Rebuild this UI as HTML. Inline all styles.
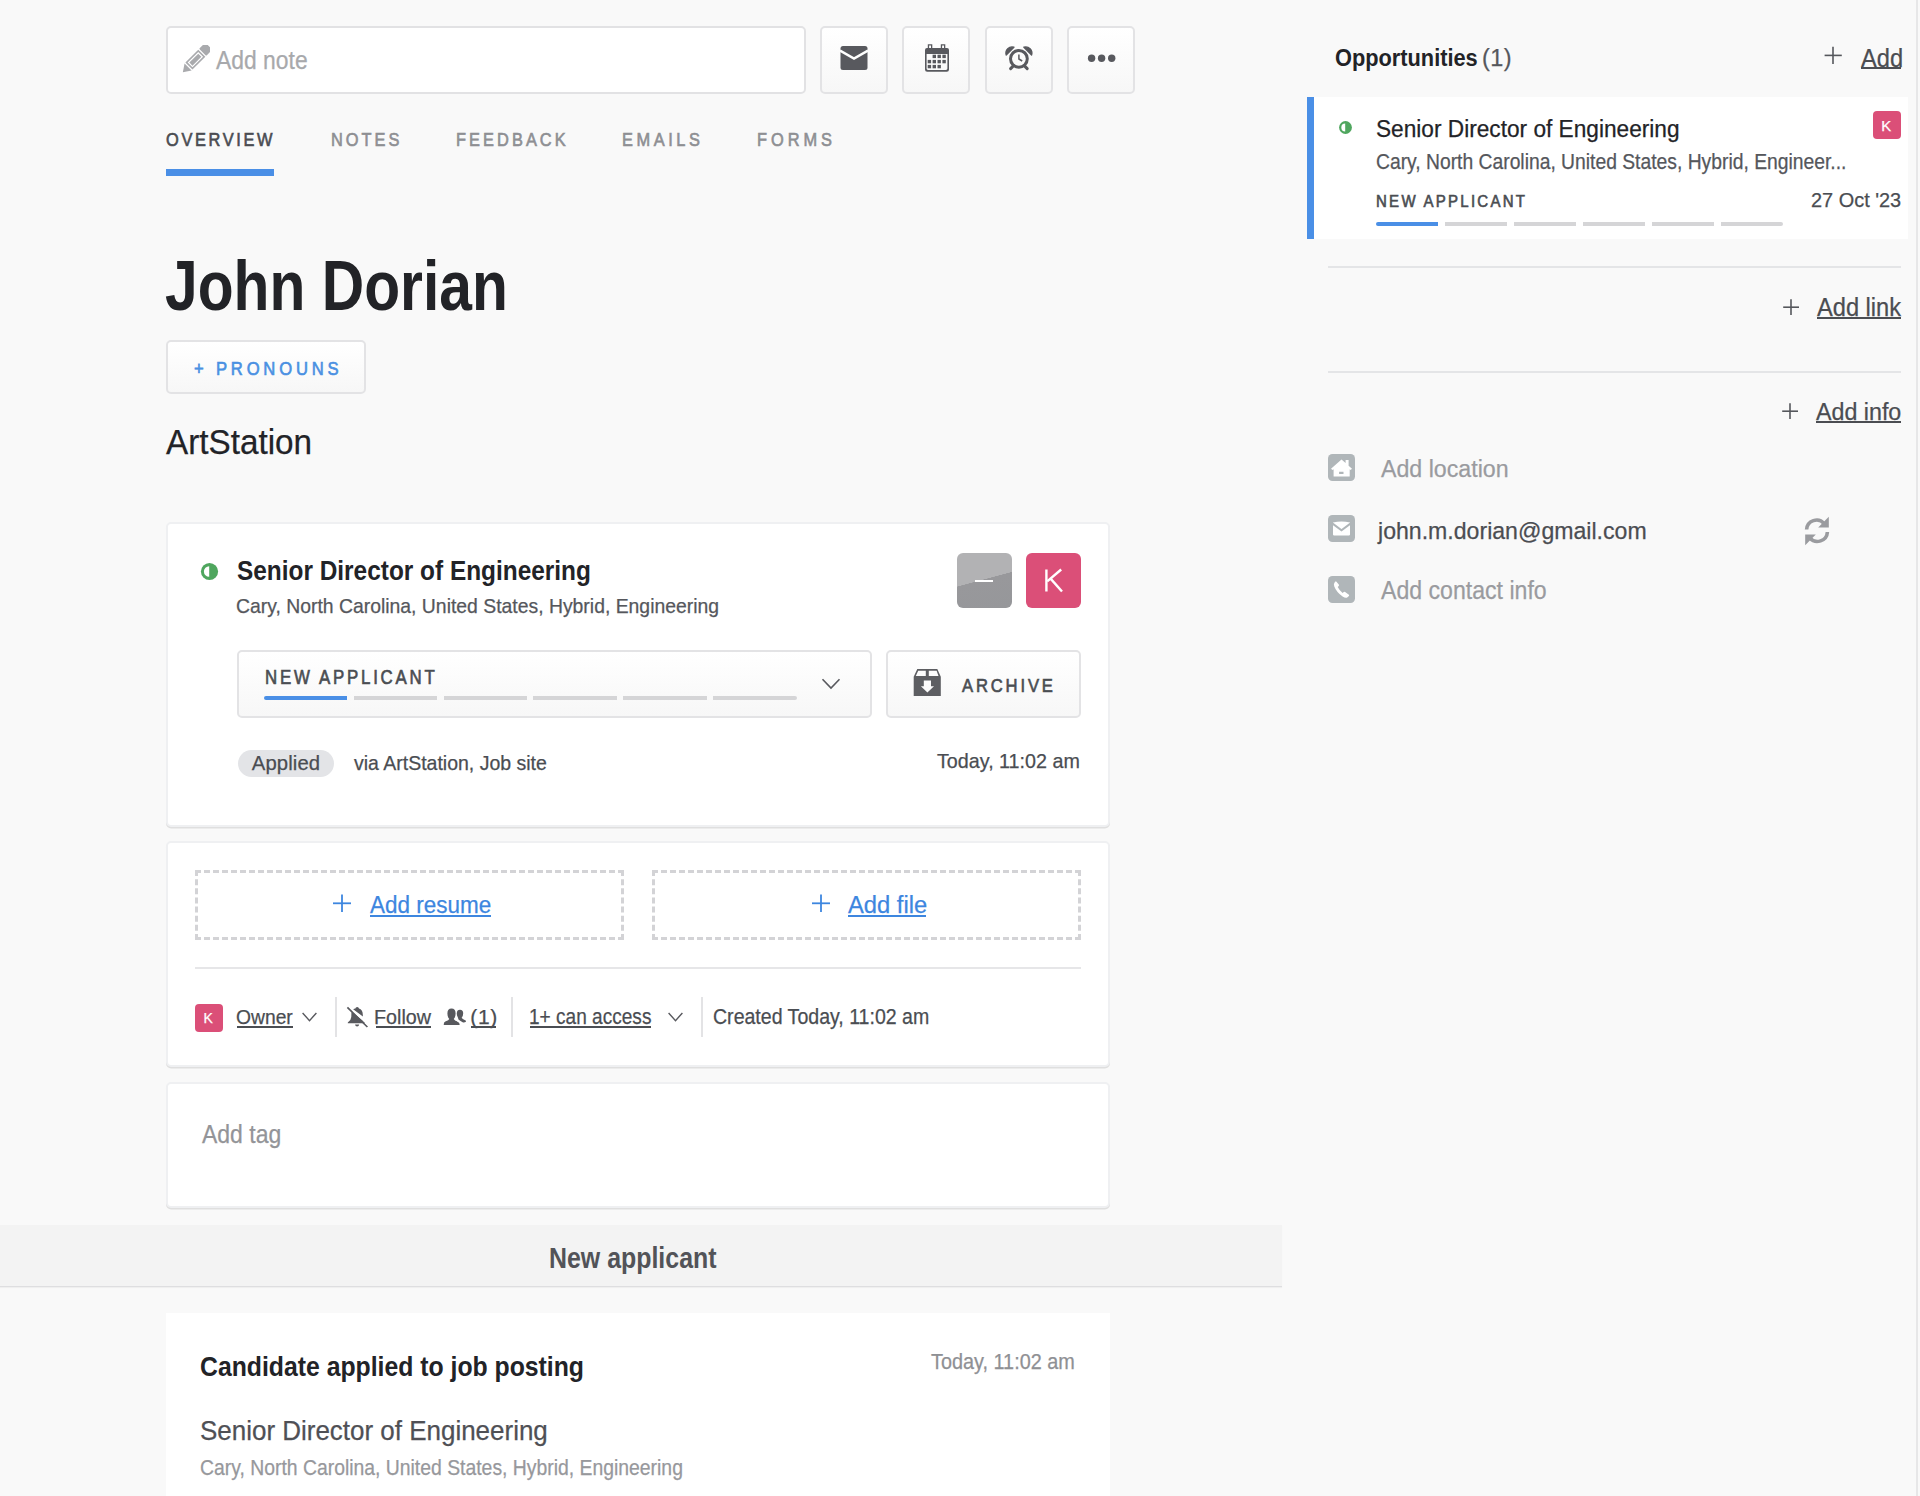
<!DOCTYPE html>
<html><head><meta charset="utf-8"><title>John Dorian</title>
<style>
html,body{margin:0;padding:0}
body{width:1920px;height:1496px;overflow:hidden;position:relative;background:#f9f9f9;font-family:"Liberation Sans",sans-serif}
.ab,.box,.btn,.card,.tx{position:absolute}
.box{box-sizing:border-box;border:2px solid #e2e2e4}
.btn{box-sizing:border-box;width:68px;height:68px;border:2px solid #e3e3e5;border-radius:5px;background:linear-gradient(#fff,#f7f7f7)}
.card{box-sizing:border-box;background:#fff;border:2px solid #eff0f2;border-radius:5px;box-shadow:0 1.5px 0.5px rgba(0,0,0,0.1)}
.gbar{height:4px;background:#d5d5d7}
.sep{top:997px;width:2px;height:40px;background:#e3e3e5}
.tx{white-space:nowrap}
</style></head><body>
<!-- top bar -->
<div class="box" style="left:166px;top:26px;width:640px;height:68px;border-radius:5px;background:#fff"></div>
<svg class="ab" style="left:182px;top:45px" width="28" height="28" viewBox="0 0 28 28">
 <g transform="translate(14 14) rotate(-45)" fill="#a9aaad">
  <polygon points="-18.6,0 -11.2,-5 -11.2,5"/>
  <path d="M-10,-5 H8.2 V5 H-10 Z M-8.4,-3.4 V3.4 H6.6 V-3.4 Z" fill-rule="evenodd"/>
  <rect x="-7.2" y="-2.2" width="12.6" height="4.4"/>
  <rect x="9.4" y="-5" width="8.8" height="10" rx="1"/>
 </g>
</svg>
<div class="btn" style="left:820px;top:26px"></div>
<div class="btn" style="left:902px;top:26px"></div>
<div class="btn" style="left:985px;top:26px"></div>
<div class="btn" style="left:1067px;top:26px"></div>
<svg class="ab" style="left:840px;top:46px" width="28" height="24" viewBox="0 0 28 24">
 <rect x="0.5" y="0" width="27" height="24" rx="2.5" fill="#58595e"/>
 <polyline points="0,4.6 14,12.6 28,4.6" fill="none" stroke="#fff" stroke-width="2.6"/>
</svg>
<svg class="ab" style="left:924px;top:43px" width="26" height="30" viewBox="0 0 26 30">
 <g fill="#58595e">
  <path d="M1,7 Q1,5 3,5 H23 Q25,5 25,7 V26.5 Q25,28.7 22.8,28.7 H3.2 Q1,28.7 1,26.5 Z M2.6,11 V25.6 Q2.6,27 4,27 H22 Q23.4,27 23.4,25.6 V11 Z" fill-rule="evenodd"/>
  <path d="M3.8,1.3 H8.3 V7.3 H3.8 Z M5.1,2.6 V6 H7 V2.6 Z" fill-rule="evenodd"/>
  <path d="M16.8,1.3 H21.3 V7.3 H16.8 Z M18.1,2.6 V6 H20 V2.6 Z" fill-rule="evenodd"/>
  <rect x="8.6" y="11.7" width="3.4" height="3.4"/><rect x="13.5" y="11.7" width="3.4" height="3.4"/><rect x="18.4" y="11.7" width="3.4" height="3.4"/>
  <rect x="3.7" y="16.9" width="3.4" height="3.4"/><rect x="8.6" y="16.9" width="3.4" height="3.4"/><rect x="13.5" y="16.9" width="3.4" height="3.4"/><rect x="18.4" y="16.9" width="3.4" height="3.4"/>
  <rect x="3.7" y="21.9" width="3.4" height="3.4"/><rect x="8.6" y="21.9" width="3.4" height="3.4"/><rect x="13.5" y="21.9" width="3.4" height="3.4"/>
 </g>
</svg>
<svg class="ab" style="left:1004px;top:45px" width="30" height="26" viewBox="0 0 30 26">
 <g fill="none" stroke="#58595e">
  <circle cx="14.9" cy="13.8" r="8.4" stroke-width="3"/>
  <polyline points="14.9,9.4 14.9,14 18.2,16" stroke-width="1.5"/>
  <line x1="9.6" y1="20.6" x2="6.6" y2="23.6" stroke-width="3" stroke-linecap="round"/>
  <line x1="20.2" y1="20.6" x2="23.2" y2="23.6" stroke-width="3" stroke-linecap="round"/>
 </g>
 <g fill="#58595e">
  <path d="M2.2,9.9 A6.2,6.2 0 0 1 9.9,2.2 Z" stroke="#58595e" stroke-width="1.4" stroke-linejoin="round"/>
  <path d="M27.6,9.9 A6.2,6.2 0 0 0 19.9,2.2 Z" stroke="#58595e" stroke-width="1.4" stroke-linejoin="round"/>
 </g>
</svg>
<svg class="ab" style="left:1086px;top:52px" width="32" height="12" viewBox="0 0 32 12">
 <g fill="#58595e"><circle cx="5.6" cy="6.2" r="3.7"/><circle cx="15.6" cy="6.2" r="3.7"/><circle cx="25.7" cy="6.2" r="3.7"/></g>
</svg>
<div class="ab" style="left:166px;top:169px;width:108px;height:7px;background:#4a8fe6"></div>

<!-- pronouns -->
<div class="btn" style="left:166px;top:340px;width:200px;height:54px"></div>

<!-- card1 -->
<div class="card" style="left:166px;top:522px;width:944px;height:305px"></div>
<svg class="ab" style="left:200px;top:562px" width="19" height="19" viewBox="0 0 19 19">
 <circle cx="9.5" cy="9.5" r="8.6" fill="#4fa65e"/>
 <path d="M9.2,4.2 A5.3,5.3 0 0 0 9.2,14.8 Z" fill="#fff"/>
</svg>
<div class="ab" style="left:957px;top:553px;width:55px;height:55px;border-radius:6px;background:linear-gradient(165deg,#b2b2b4 0%,#b2b2b4 48%,#98989b 48.5%,#96979a 100%)"></div>
<div class="ab" style="left:975px;top:580.4px;width:18px;height:1.6px;background:#fff"></div>
<div class="ab" style="left:1026px;top:553px;width:55px;height:55px;border-radius:6px;background:#db4f78"></div>
<svg class="ab" style="left:1040px;top:566px" width="26" height="28" viewBox="0 0 26 28">
 <g stroke="#fff" stroke-width="2.4" fill="none">
  <line x1="6.4" y1="3.5" x2="6.4" y2="25.5"/>
  <line x1="7.2" y1="15.3" x2="21.2" y2="3.5"/>
  <line x1="10.6" y1="12.6" x2="22" y2="25.5"/>
 </g>
</svg>
<div class="btn" style="left:237px;top:650px;width:635px;height:68px"></div>
<div class="ab" style="left:264px;top:696px;width:83px;height:4px;background:#4a8fe6;border-radius:2px 0 0 2px"></div>
<div class="ab gbar" style="left:354px;top:696px;width:83px"></div>
<div class="ab gbar" style="left:444px;top:696px;width:83px"></div>
<div class="ab gbar" style="left:533px;top:696px;width:84px"></div>
<div class="ab gbar" style="left:623px;top:696px;width:84px"></div>
<div class="ab gbar" style="left:713px;top:696px;width:84px;border-radius:0 2px 2px 0"></div>
<svg class="ab" style="left:821px;top:677px" width="20" height="14" viewBox="0 0 20 14">
 <polyline points="1.5,2.3 10,11 18.5,2.3" fill="none" stroke="#58595e" stroke-width="1.6"/>
</svg>
<div class="btn" style="left:886px;top:650px;width:195px;height:68px"></div>
<svg class="ab" style="left:912px;top:668px" width="30" height="30" viewBox="0 0 30 30">
 <path d="M1.7,8.8 L5.3,1 H25.3 L28.8,8.8 V28 H1.7 Z M3.8,8.1 L6.2,2.7 H13.8 V8.1 Z M16.8,2.7 H24.6 L26.5,8.1 H16.8 Z M11.8,12.6 H19 V18.2 H22 L15.4,24.6 L8.9,18.2 H11.8 Z" fill="#5d5e62" fill-rule="evenodd"/>
</svg>
<div class="ab" style="left:238px;top:750px;width:96px;height:27px;border-radius:14px;background:#e3e4e7"></div>

<!-- card2 -->
<div class="card" style="left:166px;top:841px;width:944px;height:226px"></div>
<div class="ab" style="left:195px;top:870px;width:429px;height:70px;box-sizing:border-box;border:3px dashed #d3d3d6"></div>
<div class="ab" style="left:652px;top:870px;width:429px;height:70px;box-sizing:border-box;border:3px dashed #d3d3d6"></div>
<svg class="ab" style="left:332px;top:894px" width="20" height="20" viewBox="0 0 20 20">
 <g stroke="#3d86df" stroke-width="1.8"><line x1="10" y1="0.6" x2="10" y2="18"/><line x1="1" y1="9.3" x2="19" y2="9.3"/></g>
</svg>
<svg class="ab" style="left:811px;top:894px" width="20" height="20" viewBox="0 0 20 20">
 <g stroke="#3d86df" stroke-width="1.8"><line x1="10" y1="0.6" x2="10" y2="18"/><line x1="1" y1="9.3" x2="19" y2="9.3"/></g>
</svg>
<div class="ab" style="left:370px;top:915px;width:121px;height:2px;background:#3d86df"></div>
<div class="ab" style="left:848px;top:915px;width:78px;height:2px;background:#3d86df"></div>
<div class="ab" style="left:195px;top:967px;width:886px;height:2px;background:#e6e6e8"></div>
<div class="ab" style="left:195px;top:1004px;width:28px;height:28px;border-radius:4px;background:#db4f78"></div>
<div class="ab" style="left:237px;top:1026px;width:56px;height:2px;background:#4a4d52"></div>
<svg class="ab" style="left:301px;top:1011px" width="17" height="12" viewBox="0 0 17 12">
 <polyline points="1.6,2 8.5,9.6 15.4,2" fill="none" stroke="#58595e" stroke-width="1.4"/>
</svg>
<div class="ab sep" style="left:335px"></div>
<svg class="ab" style="left:346px;top:1006px" width="23" height="23" viewBox="0 0 23 23">
 <g fill="#58595e">
  <path d="M11.2,1 Q12.8,1 13,2.6 Q16.6,3.6 16.8,8.6 L16.9,10.6 L7.1,3.2 Q8.1,2.7 9.4,2.6 Q9.6,1 11.2,1 Z"/>
  <path d="M5.9,6 L16.6,14.2 Q17.6,15.4 19,16.6 V17.3 H1.8 V16.6 Q5,14.6 5.3,11 L5.4,7 Z"/>
  <path d="M9,18.4 H13.2 Q12.9,20.4 11.1,20.4 Q9.3,20.4 9,18.4 Z"/>
 </g>
 <line x1="1.4" y1="1.4" x2="21.4" y2="21" stroke="#58595e" stroke-width="1.7"/>
 <line x1="2.9" y1="0.2" x2="22.2" y2="19.3" stroke="#fff" stroke-width="1.1"/>
</svg>
<div class="ab" style="left:376px;top:1026px;width:55px;height:2px;background:#4a4d52"></div>
<svg class="ab" style="left:443px;top:1008px" width="24" height="18" viewBox="0 0 24 18">
 <g fill="#58595e">
  <path d="M17,1.8 Q20.2,1.8 20.2,5.3 Q20.2,8.2 18.6,9.8 Q19.1,11 22.6,12.6 Q23.4,13.3 22.6,14 Q21.2,14.7 19.6,14.2 Q16.8,13 15.5,11.6 L14.8,9.3 Q13.6,7 13.8,5.2 Q13.9,1.8 17,1.8 Z"/>
  <path d="M8.5,0.6 Q12.6,0.6 12.6,5.4 Q12.6,9 10.7,11 Q11,12.3 14.8,13.6 Q16.8,14.6 16.6,17 H0.8 Q0.5,14.6 2.3,13.6 Q6,12.3 6.3,11 Q4.4,9 4.4,5.4 Q4.4,0.6 8.5,0.6 Z"/>
 </g>
 <path d="M12.2,11.6 Q15,13.4 17.5,14.8" fill="none" stroke="#fff" stroke-width="1.2"/>
</svg>
<div class="ab" style="left:471px;top:1026px;width:25px;height:2px;background:#4a4d52"></div>
<div class="ab sep" style="left:511px"></div>
<div class="ab" style="left:530px;top:1026px;width:121px;height:2px;background:#4a4d52"></div>
<svg class="ab" style="left:667px;top:1011px" width="17" height="12" viewBox="0 0 17 12">
 <polyline points="1.6,2 8.5,9.6 15.4,2" fill="none" stroke="#58595e" stroke-width="1.4"/>
</svg>
<div class="ab sep" style="left:701px"></div>

<!-- card3 -->
<div class="card" style="left:166px;top:1082px;width:944px;height:126px"></div>

<!-- band -->
<div class="ab" style="left:0;top:1225px;width:1282px;height:61px;background:#f3f3f3;border-bottom:1px solid #dedee0;box-shadow:0 1px 1px rgba(0,0,0,0.04)"></div>

<!-- card4 -->
<div class="ab" style="left:166px;top:1313px;width:944px;height:200px;background:#fff"></div>

<!-- sidebar -->
<svg class="ab" style="left:1823px;top:46px" width="20" height="19" viewBox="0 0 20 19">
 <g stroke="#55575c" stroke-width="1.6"><line x1="10" y1="0.8" x2="10" y2="18"/><line x1="1.6" y1="9.4" x2="18.8" y2="9.4"/></g>
</svg>
<div class="ab" style="left:1861px;top:67px;width:40px;height:2px;background:#4b4d52"></div>
<div class="ab" style="left:1307px;top:97px;width:601px;height:142px;background:#fff"></div>
<div class="ab" style="left:1307px;top:97px;width:7px;height:142px;background:#4a8fe6"></div>
<svg class="ab" style="left:1338px;top:120px" width="15" height="15" viewBox="0 0 15 15">
 <circle cx="7.5" cy="7.5" r="6.4" fill="#4fa65e"/>
 <path d="M7.2,3.6 A3.9,3.9 0 0 0 7.2,11.4 Z" fill="#fff"/>
</svg>
<div class="ab" style="left:1873px;top:111px;width:28px;height:28px;border-radius:4px;background:#db4f78"></div>
<div class="ab" style="left:1376px;top:222px;width:62px;height:4px;background:#4a8fe6;border-radius:2px 0 0 2px"></div>
<div class="ab gbar" style="left:1445px;top:222px;width:62px"></div>
<div class="ab gbar" style="left:1514px;top:222px;width:62px"></div>
<div class="ab gbar" style="left:1583px;top:222px;width:62px"></div>
<div class="ab gbar" style="left:1652px;top:222px;width:62px"></div>
<div class="ab gbar" style="left:1721px;top:222px;width:62px;border-radius:0 2px 2px 0"></div>
<div class="ab" style="left:1328px;top:266px;width:573px;height:2px;background:#e4e5e7"></div>
<div class="ab" style="left:1328px;top:371px;width:573px;height:2px;background:#e4e5e7"></div>
<svg class="ab" style="left:1782px;top:298px" width="18" height="18" viewBox="0 0 18 18">
 <g stroke="#55575c" stroke-width="1.6"><line x1="9" y1="1.2" x2="9" y2="17"/><line x1="1.2" y1="9.2" x2="17" y2="9.2"/></g>
</svg>
<div class="ab" style="left:1817px;top:317px;width:84px;height:2px;background:#4b4d52"></div>
<svg class="ab" style="left:1781px;top:402px" width="18" height="18" viewBox="0 0 18 18">
 <g stroke="#55575c" stroke-width="1.6"><line x1="9" y1="1.2" x2="9" y2="17"/><line x1="1.2" y1="9.2" x2="17" y2="9.2"/></g>
</svg>
<div class="ab" style="left:1816px;top:421px;width:85px;height:2px;background:#4b4d52"></div>
<svg class="ab" style="left:1328px;top:454px" width="27" height="27" viewBox="0 0 27 27">
 <rect width="27" height="27" rx="4.5" fill="#b0b6b9"/>
 <path d="M13.5,5.5 L17.6,9.1 V6 H20.6 V11.7 L24,14.7 L22.6,16 L21.7,15.2 V22.4 H5.6 V15.2 L4.6,16 L3,14.7 Z M11.1,17.8 V20 H15.5 V17.8 Z" fill="#fff" fill-rule="evenodd"/>
</svg>
<svg class="ab" style="left:1328px;top:515px" width="27" height="27" viewBox="0 0 27 27">
 <rect width="27" height="27" rx="4.5" fill="#b0b6b9"/>
 <path d="M5,7.6 Q13.5,5.4 22,7.6 V19.6 Q22,20.4 21.2,20.4 H5.8 Q5,20.4 5,19.6 Z" fill="#fff"/>
 <polyline points="4.6,8.6 13.5,15.2 22.4,8.6" fill="none" stroke="#b0b6b9" stroke-width="2"/>
</svg>
<svg class="ab" style="left:1328px;top:576px" width="27" height="27" viewBox="0 0 27 27">
 <rect width="27" height="27" rx="4.5" fill="#b0b6b9"/>
 <path d="M8.2,5.5 L10.8,8.6 Q11.3,9.3 10.7,10 L9.7,11.1 Q11.4,14.6 14.6,16.9 L15.8,15.9 Q16.5,15.4 17.1,15.9 L20.9,18.8 Q21.4,19.3 20.9,19.9 L19.2,21.4 Q17.6,22.4 14.6,20.5 Q8.6,16.6 6.3,10.6 Q5.3,8 6.6,6.6 L7.5,5.6 Q7.9,5.2 8.2,5.5 Z" fill="#fff"/>
</svg>
<svg class="ab" style="left:1803px;top:516px" width="28" height="30" viewBox="0 0 28 30">
 <g fill="none" stroke="#9a9b9f" stroke-width="3.6">
  <path d="M3.6,13.5 A10,10 0 0 1 21.2,7.6"/>
  <path d="M24.4,16 A10,10 0 0 1 6.8,21.9"/>
 </g>
 <g fill="#9a9b9f">
  <polygon points="25.8,0.8 25.8,11.6 15.2,11.6"/>
  <polygon points="2.2,29.2 2.2,18.4 12.8,18.4"/>
 </g>
</svg>
<div class="ab" style="left:1916px;top:0;width:2px;height:1496px;background:#e7e7e8"></div>

<span class="tx" style="left:216.00px;top:47.61px;font-size:24.93px;line-height:24.93px;color:#a8a9ac;transform:scaleX(0.9184);transform-origin:0 0;-webkit-text-stroke:0.25px">Add note</span>
<span class="tx" style="left:166.00px;top:131.39px;font-size:18.84px;line-height:18.84px;color:#4a4c52;letter-spacing:3.04px;transform:scaleX(0.8700);transform-origin:0 0;-webkit-text-stroke:0.65px">OVERVIEW</span>
<span class="tx" style="left:330.80px;top:131.39px;font-size:18.84px;line-height:18.84px;color:#8e8f93;letter-spacing:3.42px;transform:scaleX(0.8700);transform-origin:0 0;-webkit-text-stroke:0.65px">NOTES</span>
<span class="tx" style="left:455.80px;top:131.39px;font-size:18.84px;line-height:18.84px;color:#8e8f93;letter-spacing:3.51px;transform:scaleX(0.8700);transform-origin:0 0;-webkit-text-stroke:0.65px">FEEDBACK</span>
<span class="tx" style="left:621.80px;top:131.39px;font-size:18.84px;line-height:18.84px;color:#8e8f93;letter-spacing:4.11px;transform:scaleX(0.8700);transform-origin:0 0;-webkit-text-stroke:0.65px">EMAILS</span>
<span class="tx" style="left:756.60px;top:131.39px;font-size:18.84px;line-height:18.84px;color:#8e8f93;letter-spacing:4.54px;transform:scaleX(0.8700);transform-origin:0 0;-webkit-text-stroke:0.65px">FORMS</span>
<span class="tx" style="left:165.20px;top:250.68px;font-size:70.14px;line-height:70.14px;color:#222327;font-weight:700;transform:scaleX(0.8382);transform-origin:0 0">John Dorian</span>
<span class="tx" style="left:193.60px;top:358.64px;font-size:19.13px;line-height:19.13px;color:#4a90e2;letter-spacing:4.37px;transform:scaleX(0.8700);transform-origin:0 0;-webkit-text-stroke:0.65px">+ PRONOUNS</span>
<span class="tx" style="left:166.20px;top:424.86px;font-size:34.93px;line-height:34.93px;color:#222327;transform:scaleX(0.9521);transform-origin:0 0;-webkit-text-stroke:0.25px">ArtStation</span>
<span class="tx" style="left:236.60px;top:558.49px;font-size:26.96px;line-height:26.96px;color:#222327;font-weight:700;transform:scaleX(0.9054);transform-origin:0 0">Senior Director of Engineering</span>
<span class="tx" style="left:236.00px;top:596.35px;font-size:20.29px;line-height:20.29px;color:#55575c;transform:scaleX(0.9551);transform-origin:0 0;-webkit-text-stroke:0.25px">Cary, North Carolina, United States, Hybrid, Engineering</span>
<span class="tx" style="left:265.00px;top:668.38px;font-size:19.35px;line-height:19.35px;color:#4a4d52;letter-spacing:3.18px;transform:scaleX(0.8700);transform-origin:0 0;-webkit-text-stroke:0.65px">NEW APPLICANT</span>
<span class="tx" style="left:961.80px;top:675.64px;font-size:19.13px;line-height:19.13px;color:#4a4d52;letter-spacing:3.26px;transform:scaleX(0.8700);transform-origin:0 0;-webkit-text-stroke:0.65px">ARCHIVE</span>
<span class="tx" style="left:251.80px;top:752.55px;font-size:20.29px;line-height:20.29px;color:#4a4d52;letter-spacing:0.10px;-webkit-text-stroke:0.25px">Applied</span>
<span class="tx" style="left:354.20px;top:752.55px;font-size:20.29px;line-height:20.29px;color:#4a4d52;transform:scaleX(0.9610);transform-origin:0 0;-webkit-text-stroke:0.25px">via ArtStation, Job site</span>
<span class="tx" style="left:937.00px;top:750.86px;font-size:20.87px;line-height:20.87px;color:#4a4d52;transform:scaleX(0.9454);transform-origin:0 0;-webkit-text-stroke:0.25px">Today, 11:02 am</span>
<span class="tx" style="left:370.20px;top:892.80px;font-size:24.35px;line-height:24.35px;color:#3d86df;transform:scaleX(0.9231);transform-origin:0 0;-webkit-text-stroke:0.25px">Add resume</span>
<span class="tx" style="left:848.00px;top:892.80px;font-size:24.35px;line-height:24.35px;color:#3d86df;transform:scaleX(0.9751);transform-origin:0 0;-webkit-text-stroke:0.25px">Add file</span>
<span class="tx" style="left:236.20px;top:1005.89px;font-size:21.01px;line-height:21.01px;color:#4a4d52;transform:scaleX(0.9182);transform-origin:0 0;-webkit-text-stroke:0.25px">Owner</span>
<span class="tx" style="left:374.20px;top:1005.89px;font-size:21.01px;line-height:21.01px;color:#4a4d52;transform:scaleX(0.9392);transform-origin:0 0;-webkit-text-stroke:0.25px">Follow</span>
<span class="tx" style="left:470.20px;top:1005.89px;font-size:21.01px;line-height:21.01px;color:#4a4d52;letter-spacing:0.75px;-webkit-text-stroke:0.25px">(1)</span>
<span class="tx" style="left:529.00px;top:1006.49px;font-size:21.59px;line-height:21.59px;color:#4a4d52;transform:scaleX(0.8838);transform-origin:0 0;-webkit-text-stroke:0.25px">1+ can access</span>
<span class="tx" style="left:713.20px;top:1006.49px;font-size:21.59px;line-height:21.59px;color:#4a4d52;transform:scaleX(0.9059);transform-origin:0 0;-webkit-text-stroke:0.25px">Created Today, 11:02 am</span>
<span class="tx" style="left:202.00px;top:1122.29px;font-size:25.36px;line-height:25.36px;color:#939498;transform:scaleX(0.9060);transform-origin:0 0;-webkit-text-stroke:0.25px">Add tag</span>
<span class="tx" style="left:549.00px;top:1242.67px;font-size:29.57px;line-height:29.57px;color:#525358;font-weight:700;transform:scaleX(0.8427);transform-origin:0 0">New applicant</span>
<span class="tx" style="left:200.20px;top:1353.02px;font-size:27.68px;line-height:27.68px;color:#222327;font-weight:700;transform:scaleX(0.8953);transform-origin:0 0">Candidate applied to job posting</span>
<span class="tx" style="left:931.00px;top:1351.87px;font-size:21.45px;line-height:21.45px;color:#8f9094;transform:scaleX(0.9260);transform-origin:0 0;-webkit-text-stroke:0.25px">Today, 11:02 am</span>
<span class="tx" style="left:199.60px;top:1416.59px;font-size:27.54px;line-height:27.54px;color:#4f5055;transform:scaleX(0.9430);transform-origin:0 0;-webkit-text-stroke:0.25px">Senior Director of Engineering</span>
<span class="tx" style="left:200.00px;top:1456.69px;font-size:21.59px;line-height:21.59px;color:#97989c;transform:scaleX(0.8974);transform-origin:0 0;-webkit-text-stroke:0.25px">Cary, North Carolina, United States, Hybrid, Engineering</span>
<span class="tx" style="left:1335.00px;top:46.64px;font-size:23.48px;line-height:23.48px;color:#222327;font-weight:700;transform:scaleX(0.9276);transform-origin:0 0">Opportunities</span>
<span class="tx" style="left:1482.00px;top:46.64px;font-size:23.48px;line-height:23.48px;color:#55575c;letter-spacing:0.50px;-webkit-text-stroke:0.25px">(1)</span>
<span class="tx" style="left:1860.80px;top:45.52px;font-size:25.51px;line-height:25.51px;color:#4b4d52;transform:scaleX(0.9274);transform-origin:0 0;-webkit-text-stroke:0.25px">Add</span>
<span class="tx" style="left:1375.60px;top:116.72px;font-size:23.91px;line-height:23.91px;color:#222327;transform:scaleX(0.9478);transform-origin:0 0;-webkit-text-stroke:0.25px">Senior Director of Engineering</span>
<span class="tx" style="left:1375.60px;top:151.21px;font-size:21.16px;line-height:21.16px;color:#55575c;transform:scaleX(0.9119);transform-origin:0 0;-webkit-text-stroke:0.25px">Cary, North Carolina, United States, Hybrid, Engineer...</span>
<span class="tx" style="left:1375.60px;top:193.19px;font-size:17.25px;line-height:17.25px;color:#4a4d52;letter-spacing:2.61px;transform:scaleX(0.8700);transform-origin:0 0;-webkit-text-stroke:0.65px">NEW APPLICANT</span>
<span class="tx" style="left:1810.80px;top:189.75px;font-size:20.29px;line-height:20.29px;color:#4a4d52;transform:scaleX(0.9822);transform-origin:0 0;-webkit-text-stroke:0.25px">27 Oct '23</span>
<span class="tx" style="left:1816.80px;top:294.67px;font-size:25.22px;line-height:25.22px;color:#4b4d52;transform:scaleX(0.9371);transform-origin:0 0;-webkit-text-stroke:0.25px">Add link</span>
<span class="tx" style="left:1815.60px;top:399.92px;font-size:23.91px;line-height:23.91px;color:#4b4d52;transform:scaleX(0.9724);transform-origin:0 0;-webkit-text-stroke:0.25px">Add info</span>
<span class="tx" style="left:1381.00px;top:457.23px;font-size:24.49px;line-height:24.49px;color:#9a9b9f;transform:scaleX(0.9474);transform-origin:0 0;-webkit-text-stroke:0.25px">Add location</span>
<span class="tx" style="left:1378.00px;top:518.74px;font-size:24.57px;line-height:24.57px;color:#4b4d52;transform:scaleX(0.9404);transform-origin:0 0;-webkit-text-stroke:0.25px">john.m.dorian@gmail.com</span>
<span class="tx" style="left:1381.00px;top:578.49px;font-size:25.36px;line-height:25.36px;color:#9a9b9f;transform:scaleX(0.9111);transform-origin:0 0;-webkit-text-stroke:0.25px">Add contact info</span>
<span class="tx" style="left:203.40px;top:1011.40px;font-size:14.06px;line-height:14.06px;color:#ffffff;letter-spacing:3.40px;-webkit-text-stroke:0.25px">K</span>
<span class="tx" style="left:1881.20px;top:118.56px;font-size:14.93px;line-height:14.93px;color:#ffffff;letter-spacing:0.30px;-webkit-text-stroke:0.25px">K</span>

</body></html>
